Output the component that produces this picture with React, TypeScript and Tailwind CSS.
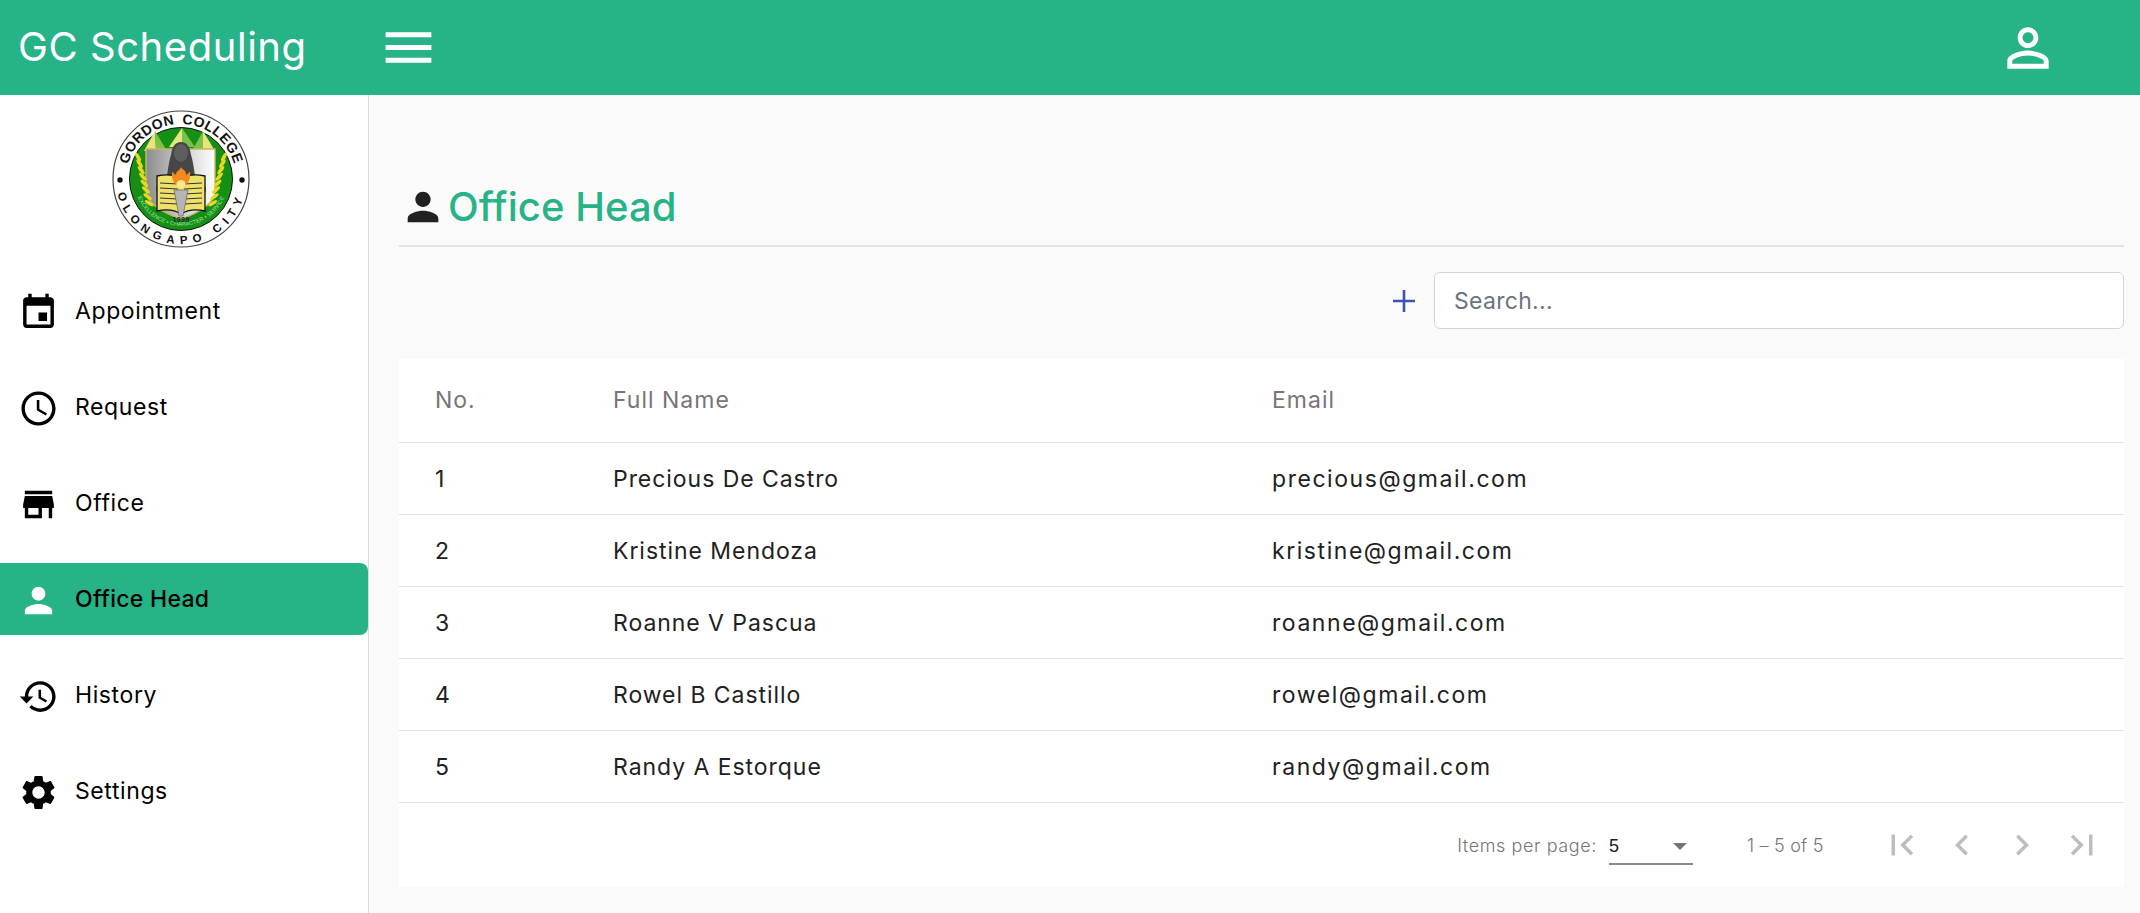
import React from "react";

const P = {
  event: "M17 12h-5v5h5v-5zM16 1v2H8V1H6v2H5c-1.11 0-1.99.9-1.99 2L3 19c0 1.1.89 2 2 2h14c1.1 0 2-.9 2-2V5c0-1.1-.9-2-2-2h-1V1h-2zm3 18H5V8h14v11z",
  schedule: "M11.99 2C6.47 2 2 6.48 2 12s4.47 10 9.99 10C17.52 22 22 17.52 22 12S17.52 2 11.99 2zM12 20c-4.42 0-8-3.58-8-8s3.58-8 8-8 8 3.58 8 8-3.58 8-8 8zm.5-13H11v6l5.25 3.15.75-1.23-4.5-2.67z",
  store: "M20 4H4v2h16V4zm1 10v-2l-1-5H4l-1 5v2h1v6h10v-6h4v6h2v-6h1zm-9 4H6v-4h6v4z",
  person: "M12 12c2.21 0 4-1.79 4-4s-1.79-4-4-4-4 1.79-4 4 1.79 4 4 4zm0 2c-2.67 0-8 1.34-8 4v2h16v-2c0-2.66-5.33-4-8-4z",
  history: "M13 3c-4.97 0-9 4.03-9 9H1l3.89 3.89.07.14L9 12H6c0-3.87 3.13-7 7-7s7 3.13 7 7-3.13 7-7 7c-1.93 0-3.68-.79-4.94-2.06l-1.42 1.42C8.27 19.99 10.51 21 13 21c4.97 0 9-4.03 9-9s-4.03-9-9-9zm-1 5v5l4.28 2.54.72-1.21-3.5-2.08V8H12z",
  settings: "M19.14 12.94c.04-.3.06-.61.06-.94 0-.32-.02-.64-.07-.94l2.03-1.58c.18-.14.23-.41.12-.61l-1.92-3.32c-.12-.22-.37-.29-.59-.22l-2.39.96c-.5-.38-1.03-.7-1.62-.94l-.36-2.54c-.04-.24-.24-.41-.48-.41h-3.84c-.24 0-.43.17-.47.41l-.36 2.54c-.59.24-1.13.57-1.62.94l-2.39-.96c-.22-.08-.47 0-.59.22L2.74 8.87c-.12.21-.08.47.12.61l2.03 1.58c-.05.3-.09.63-.09.94s.02.64.07.94l-2.03 1.58c-.18.14-.23.41-.12.61l1.92 3.32c.12.22.37.29.59.22l2.39-.96c.5.38 1.03.7 1.62.94l.36 2.54c.05.24.24.41.48.41h3.84c.24 0 .44-.17.47-.41l.36-2.54c.59-.24 1.13-.56 1.62-.94l2.39.96c.22.08.47 0 .59-.22l1.92-3.32c.12-.22.07-.47-.12-.61l-2.01-1.58zM12 15.6c-1.98 0-3.6-1.62-3.6-3.6s1.62-3.6 3.6-3.6 3.6 1.62 3.6 3.6-1.62 3.6-3.6 3.6z",
  personOutline: "M12 5.9c1.16 0 2.1.94 2.1 2.1s-.94 2.1-2.1 2.1S9.9 9.16 9.9 8s.94-2.1 2.1-2.1m0 9c2.97 0 6.1 1.46 6.1 2.1v1.1H5.9V17c0-.64 3.13-2.1 6.1-2.1M12 4C9.79 4 8 5.79 8 8s1.79 4 4 4 4-1.79 4-4-1.79-4-4-4zm0 9c-2.67 0-8 1.34-8 4v3h16v-3c0-2.66-5.33-4-8-4z",
  menu: "M3 18h18v-2H3v2zm0-5h18v-2H3v2zm0-5h18V6H3v2z",
  first: "M18.41 16.59L13.82 12l4.59-4.59L17 6l-6 6 6 6zM6 6h2v12H6z",
  last: "M5.59 7.41L10.18 12l-4.59 4.59L7 18l6-6-6-6zM16 6h2v12h-2z",
  left: "M15.41 7.41L14 6l-6 6 6 6 1.41-1.41L10.83 12z",
  right: "M10 6L8.59 7.41 13.17 12l-4.58 4.59L10 18l6-6z",
};

function Icon({ d, className }: { d: string; className: string }) {
  return (
    <svg viewBox="0 0 24 24" fill="currentColor" className={className} aria-hidden="true">
      <path d={d} />
    </svg>
  );
}

function Logo() {
  const leaves = [0, 1, 2, 3, 4, 5, 6, 7];
  return (
    <svg viewBox="0 0 140 140" className="w-[140px] h-[140px]" aria-label="Gordon College seal">
      <defs>
        <path id="arcTop" d="M 15 70 a 55 55 0 1 1 110 0" />
        <path id="arcBottom" d="M 5 70 a 65 65 0 0 0 130 0" />
        <path id="arcBand" d="M 23 70 a 47 47 0 0 0 94 0" />
        <linearGradient id="shield" x1="0" x2="1" y1="0" y2="0">
          <stop offset="0" stopColor="#8c8c8c" />
          <stop offset="0.55" stopColor="#cfcfcf" />
          <stop offset="1" stopColor="#ffffff" />
        </linearGradient>
      </defs>
      <circle cx="70" cy="70" r="68" fill="#fff" stroke="#444" strokeWidth="1.2" />
      <text fontFamily="'Liberation Sans',sans-serif" fontWeight="700" fontSize="14" fill="#111" letterSpacing="0.4" wordSpacing="3">
        <textPath href="#arcTop" startOffset="50%" textAnchor="middle">GORDON COLLEGE</textPath>
      </text>
      <text fontFamily="'Liberation Sans',sans-serif" fontWeight="700" fontSize="11.5" fill="#111" letterSpacing="6">
        <textPath href="#arcBottom" startOffset="50%" textAnchor="middle">OLONGAPO CITY</textPath>
      </text>
      <circle cx="9" cy="71" r="2.7" fill="#111" />
      <circle cx="131" cy="71" r="2.7" fill="#111" />
      <circle cx="70" cy="70" r="51.5" fill="#159015" stroke="#111" strokeWidth="1" />
      <polygon points="33,42 44,22 45,42" fill="#e9e57e" />
      <polygon points="44,22 45,42 56,42" fill="#7cc24a" />
      <polygon points="58,38 71,19 71,38" fill="#e9e57e" />
      <polygon points="71,19 71,38 84,38" fill="#7cc24a" />
      <polygon points="81,42 92,22 92,42" fill="#7cc24a" />
      <polygon points="92,22 92,42 104,42" fill="#e9e57e" />
      <path d="M35 40h69v42c0 12-16 22-34 28-18-6-35-16-35-28z" fill="url(#shield)" stroke="#c9b75e" strokeWidth="1.4" />
      <path d="M55 74c2-14 3-22 5-28 1-8 4-13 10-13s9 5 10 13c2 6 3 14 5 28z" fill="#464646" />
      <ellipse cx="70" cy="44" rx="7" ry="9" fill="#5e5e5e" />
      <ellipse cx="70" cy="80" rx="25" ry="14" fill="#1a7d1a" />
      {leaves.map((i) => (
        <g key={i}>
          <ellipse cx={27 + i * 1.6} cy={48 + i * 6.6} rx="1.8" ry="5" fill="#e9d81f" transform={`rotate(${-30 + i * -4} ${27 + i * 1.6} ${48 + i * 6.6})`} />
          <ellipse cx={113 - i * 1.6} cy={48 + i * 6.6} rx="1.8" ry="5" fill="#e9d81f" transform={`rotate(${30 + i * 4} ${113 - i * 1.6} ${48 + i * 6.6})`} />
        </g>
      ))}
      <path d="M46 67c9-2 18-1 24 2 6-3 15-4 24-2v35c-9-2-18-1-24 3-6-4-15-5-24-3z" fill="#efe06a" stroke="#111" strokeWidth="1.3" />
      {[74, 79, 84, 89, 94].map((y) => (
        <g key={y} stroke="#333" strokeWidth="1">
          <line x1="49" x2="67" y1={y} y2={y + 1} />
          <line x1="73" x2="91" y1={y + 1} y2={y} />
        </g>
      ))}
      <path d="M63 81h14l-5 26h-4z" fill="#b5b5b5" stroke="#555" strokeWidth="0.6" />
      <path d="M70 58c2 4 5 2 5 8 2-1 3-3 4-3 1 7-2 13-9 15-7-2-10-8-9-15 1 0 2 2 4 3 0-5 4-4 5-8z" fill="#f28a1e" />
      <ellipse cx="70" cy="75" rx="4.5" ry="4" fill="#ffe88a" />
      <text x="70" y="113" textAnchor="middle" fontFamily="'Liberation Sans',sans-serif" fontSize="7" fontWeight="700" fill="#222" letterSpacing="0.4">1999</text>
      <text fontFamily="'Liberation Sans',sans-serif" fontSize="5.6" fill="#a6e6a6" letterSpacing="0.1">
        <textPath href="#arcBand" startOffset="50%" textAnchor="middle">EXCELLENCE • CHARACTER • SERVICE</textPath>
      </text>
    </svg>
  );
}

const nav = [
  { label: "Appointment", d: P.event },
  { label: "Request", d: P.schedule },
  { label: "Office", d: P.store },
  { label: "Office Head", d: P.person, active: true },
  { label: "History", d: P.history },
  { label: "Settings", d: P.settings },
];

const rows = [
  ["1", "Precious De Castro", "precious@gmail.com"],
  ["2", "Kristine Mendoza", "kristine@gmail.com"],
  ["3", "Roanne V Pascua", "roanne@gmail.com"],
  ["4", "Rowel B Castillo", "rowel@gmail.com"],
  ["5", "Randy A Estorque", "randy@gmail.com"],
];

export default function App() {
  return (
    <div className="h-[913px] w-[2140px] overflow-hidden flex flex-col bg-[#fafafa] font-['Inter','Noto_Sans',sans-serif]">
      <header className="h-[95px] shrink-0 bg-[#26b387] flex items-center text-white">
        <div className="w-[378px] pl-[18px] pb-[2px] text-[40px] tracking-[0.55px] leading-none shrink-0">GC Scheduling</div>
        <Icon d={P.menu} className="w-[61px] h-[61px]" />
        <div className="flex-1" />
        <Icon d={P.personOutline} className="w-[62px] h-[62px] mr-[81px]" />
      </header>
      <div className="flex flex-1 min-h-0">
        <aside className="w-[369px] shrink-0 bg-white border-r border-r-[#dcdcdc] flex flex-col">
          <div className="h-[168px] shrink-0 flex justify-center pt-[14px] pr-[7px]">
            <Logo />
          </div>
          <nav className="flex flex-col">
            {nav.map((n) => (
              <div
                key={n.label}
                className={
                  n.active
                    ? "h-[72px] my-[12px] flex items-center pl-[18px] bg-[#26b387] rounded-r-[8px] text-black font-medium"
                    : "h-[72px] my-[12px] flex items-center pl-[18px] text-black"
                }
              >
                <Icon d={n.d} className={n.active ? "w-[41px] h-[41px] mt-[2px] text-white" : "w-[41px] h-[41px] mt-[2px] text-black"} />
                <span className={n.active ? "ml-[16px] mt-[1px] text-[23px] tracking-[0.3px]" : "ml-[16px] mt-[1px] text-[23px] tracking-[0.6px]"}>{n.label}</span>
              </div>
            ))}
          </nav>
        </aside>
        <main className="flex-1 min-w-0 pl-[30px] pr-[16px]">
          <div className="h-[152px] border-b-2 border-b-[#e3e3e3] flex items-end pb-[12px] pl-[1px]">
            <Icon d={P.person} className="w-[46px] h-[46px] text-[#212121] mb-[3px]" />
            <h1 className="ml-[2px] text-[40px] font-medium leading-[52px] tracking-[0.05px] text-[#26b387]">Office Head</h1>
          </div>
          <div className="mt-[25px] flex items-center justify-end">
            <svg viewBox="0 0 24 24" className="w-[24px] h-[24px] mr-[18px] text-[#3f51b5]" stroke="currentColor" strokeWidth="2.6" fill="none">
              <path d="M12 1v22M1 12h22" />
            </svg>
            <input
              readOnly
              placeholder="Search..."
              className="w-[690px] h-[57px] bg-white rounded-[6px] border border-[#d1d5db] px-[19px] text-[23px] tracking-[0.3px] placeholder:text-[#6b7280] outline-none"
            />
          </div>
          <div className="mt-[30px] bg-white">
            <div className="h-[84px] grid grid-cols-[214px_659px_1fr] items-center border-b border-b-[#e0e0e0] text-[23px] tracking-[1px] text-[#7b7374]">
              <div className="pl-[36px]">No.</div>
              <div>Full Name</div>
              <div>Email</div>
            </div>
            {rows.map((r) => (
              <div key={r[0]} className="h-[72px] pt-[2px] grid grid-cols-[214px_659px_1fr] items-center border-b border-b-[#e0e0e0] text-[23px] text-[#212121]">
                <div className="pl-[36px]">{r[0]}</div>
                <div className="tracking-[0.95px]">{r[1]}</div>
                <div className="tracking-[1.55px]">{r[2]}</div>
              </div>
            ))}
            <div className="h-[84px] flex items-center justify-end text-[18px] font-light tracking-[0.6px] text-[#757575] pr-[12px]">
              <span>Items per page:</span>
              <div className="relative ml-[12px] w-[84px] h-[36px] border-b-2 border-b-[#8a8a8a] flex items-center justify-between pr-[6px] mt-[4px]">
                <span className="text-[#212121] font-['Liberation_Sans',sans-serif] text-[18px]">5</span>
                <span className="w-0 h-0 border-x-[7px] border-x-transparent border-t-[7px] border-t-[#757575]" />
              </div>
              <span className="ml-[54px] w-[80px] mr-[45px] whitespace-nowrap tracking-[0.2px]">1 – 5 of 5</span>
              {[P.first, P.left, P.right, P.last].map((d) => (
                <div key={d} className="w-[60px] flex justify-center">
                  <Icon d={d} className="w-[42px] h-[42px] text-[#bdbdbd]" />
                </div>
              ))}
            </div>
          </div>
        </main>
      </div>
    </div>
  );
}
